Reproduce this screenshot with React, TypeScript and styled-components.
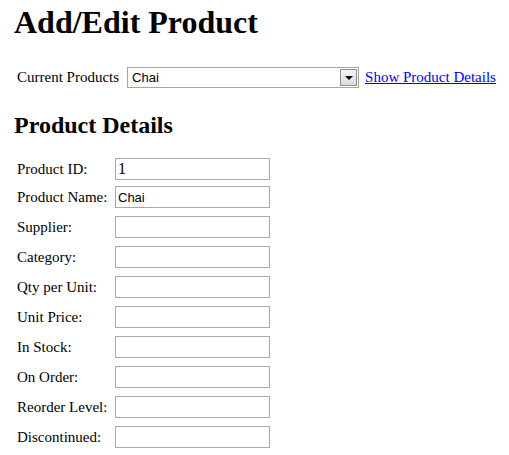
import React from 'react'
import styled, { createGlobalStyle } from 'styled-components'

const GlobalStyle = createGlobalStyle`
  body {
    margin: 0;
    background: #fff;
    color: #000;
    font-family: 'Liberation Serif', 'Times New Roman', serif;
  }
`

const Page = styled.div`
  padding: 4px 0 0 14px;
`

const Title = styled.h1`
  margin: 0;
  font-size: 32px;
  line-height: 37px;
  font-weight: bold;
`

const Toolbar = styled.div`
  display: flex;
  align-items: center;
  margin-top: 26px;
  padding-left: 3px;
  font-size: 15px;
  line-height: 17px;
  white-space: nowrap;

  & > * {
    flex-shrink: 0;
  }
`

const ToolbarLabel = styled.span`
  margin-right: 8px;
`

const SelectBox = styled.div`
  display: flex;
  box-sizing: border-box;
  width: 232px;
  height: 21px;
  padding: 1px;
  border: 1px solid #a5a5a5;
  background: #fff;
`

const SelectValue = styled.span`
  flex: 1;
  padding-left: 3px;
  font-family: 'Liberation Sans', Arial, sans-serif;
  font-size: 13px;
  line-height: 17px;
`

const DropButton = styled.span`
  display: flex;
  align-items: center;
  justify-content: center;
  box-sizing: border-box;
  width: 17px;
  border: 1px solid #8e8e8e;
  background: linear-gradient(#f4f4f4, #dcdcdc);
`

const Caret = styled.span`
  width: 0;
  height: 0;
  border-left: 4px solid transparent;
  border-right: 4px solid transparent;
  border-top: 4px solid #000;
`

const DetailsLink = styled.a`
  margin-left: 6px;
  color: #0000ff;
  text-decoration: underline;
  cursor: pointer;
`

const SectionTitle = styled.h2`
  margin: 23px 0 0;
  font-size: 24px;
  line-height: 28px;
  font-weight: bold;
`

const Form = styled.div`
  display: flex;
  flex-direction: column;
  margin-top: 19px;
`

const FieldRow = styled.div<{ $gap: number }>`
  display: flex;
  align-items: center;
  margin-top: ${(p) => p.$gap}px;
`

const FieldLabel = styled.label`
  box-sizing: border-box;
  width: 101px;
  padding-left: 3px;
  font-size: 15px;
  line-height: 17px;
  white-space: nowrap;
`

const TextBox = styled.input<{ $serif?: boolean }>`
  box-sizing: border-box;
  width: 155px;
  height: 22px;
  margin: 0;
  padding: 0 2px;
  border: 1px solid #a9a9a9;
  outline: none;
  color: #000;
  background: #fff;
  font-family: ${(p) =>
    p.$serif ? "'Liberation Serif', 'Times New Roman', serif" : "'Liberation Sans', Arial, sans-serif"};
  font-size: ${(p) => (p.$serif ? 16 : 13)}px;
`

const fields = [
  { label: 'Product ID:', value: '1', serif: true, gap: 0 },
  { label: 'Product Name:', value: 'Chai', gap: 6 },
  { label: 'Supplier:', value: '', gap: 8 },
  { label: 'Category:', value: '', gap: 8 },
  { label: 'Qty per Unit:', value: '', gap: 8 },
  { label: 'Unit Price:', value: '', gap: 8 },
  { label: 'In Stock:', value: '', gap: 8 },
  { label: 'On Order:', value: '', gap: 8 },
  { label: 'Reorder Level:', value: '', gap: 8 },
  { label: 'Discontinued:', value: '', gap: 8 },
]

const App: React.FC = () => {
  return (
    <>
      <GlobalStyle />
      <Page>
        <Title>Add/Edit Product</Title>
        <Toolbar>
          <ToolbarLabel>Current Products</ToolbarLabel>
          <SelectBox>
            <SelectValue>Chai</SelectValue>
            <DropButton>
              <Caret />
            </DropButton>
          </SelectBox>
          <DetailsLink>Show Product Details</DetailsLink>
        </Toolbar>
        <SectionTitle>Product Details</SectionTitle>
        <Form>
          {fields.map((f) => (
            <FieldRow key={f.label} $gap={f.gap}>
              <FieldLabel>{f.label}</FieldLabel>
              <TextBox $serif={f.serif} defaultValue={f.value} readOnly />
            </FieldRow>
          ))}
        </Form>
      </Page>
    </>
  )
}

export default App
